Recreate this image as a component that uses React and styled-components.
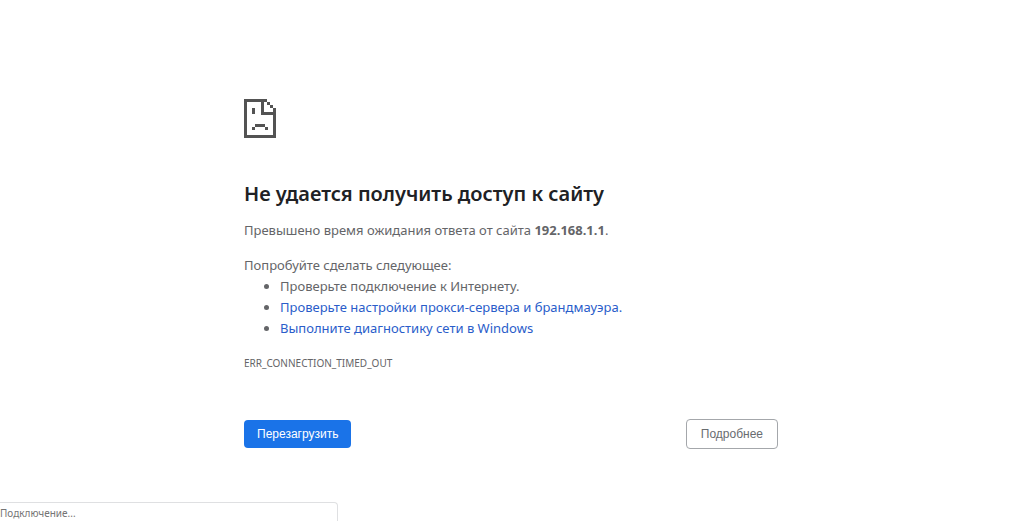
import React, { useState } from 'react'
import styled, { createGlobalStyle } from 'styled-components'

const GlobalStyle = createGlobalStyle`
body{
  margin:0;
  background:#fff;
  color:#646568;
  font-family:"Noto Sans", "Open Sans", sans-serif;
  font-size:13px;
  line-height:21px;
}
`;
const Page = styled.div`
display:flex;
flex-direction:column;
min-height:100vh;
`;
const Container = styled.main`
flex:1;
box-sizing:border-box;
width:100%;
max-width:568px;
margin:0 auto;
padding:99px 18px 24px 16px;
`;
const Icon = styled.svg`
display:block;
width:32px;
height:39px;
fill:#535353;
`;
const Title = styled.h1`
margin:41px 0 0;
color:#202124;
font-size:20px;
font-weight:600;
line-height:30px;
`;
const Text = styled.p`
margin:11px 0 0;
& + &{
  margin-top:14px;
}
`;
const List = styled.ul`
margin:0;
padding:0 0 0 36px;
`;
const Link = styled.a`
color:#2a5dca;
text-decoration:none;
&:hover{
  text-decoration:underline;
}
`;
const ErrorCode = styled.div`
margin-top:14px;
font-size:10px;
`;
const Buttons = styled.div`
display:flex;
justify-content:space-between;
align-items:center;
flex-wrap:wrap;
gap:12px;
margin-top:45px;
`;
const Button = styled.button`
padding:${({ $primary }) => ($primary ? '6px 13px' : '6px 14px')};
border:${({ $primary }) => ($primary ? '0' : '1px solid #a4a7ab')};
border-radius:4px;
background:${({ $primary }) => ($primary ? '#1a73e8' : '#fff')};
color:${({ $primary }) => ($primary ? '#fff' : '#696c70')};
font-family:"Liberation Sans", Arial, sans-serif;
font-size:12px;
line-height:16px;
cursor:pointer;
`;
const Status = styled.div`
box-sizing:border-box;
width:33%;
padding:2px 0 0;
border:1px solid #dfe0e2;
border-width:1px 1px 0 0;
border-radius:0 4px 0 0;
color:#757575;
font-size:10px;
line-height:16px;
`;

const SadPage = () => (
  <Icon viewBox="0 0 32 39" shapeRendering="crispEdges" aria-hidden="true">
    <path d="M0 0H23V3H20V13H29V9H32V39H0ZM3 3V36H29V16H17V3Z" fillRule="evenodd" />
    <path d="M23 3h3v3h-3zM26 6h3v3h-3z" />
    <path d="M8 9h3v6H8zM11 25h10v3H11zM8 28h3v3H8zM21 28h3v3h-3z" />
  </Icon>
);

const App = () => {
  const [loading, setLoading] = useState(true);

  return (
    <Page>
      <GlobalStyle />
      <Container>
        <SadPage />
        <Title>Не удается получить доступ к сайту</Title>
        <Text>
          Превышено время ожидания ответа от сайта <strong>192.168.1.1</strong>.
        </Text>
        <Text>Попробуйте сделать следующее:</Text>
        <List>
          <li>Проверьте подключение к Интернету.</li>
          <li><Link href="#proxy">Проверьте настройки прокси-сервера и брандмауэра.</Link></li>
          <li><Link href="#diagnose">Выполните диагностику сети в Windows</Link></li>
        </List>
        <ErrorCode>ERR_CONNECTION_TIMED_OUT</ErrorCode>
        <Buttons>
          <Button type="button" $primary onClick={() => setLoading(true)}>Перезагрузить</Button>
          <Button type="button" onClick={() => setLoading(false)}>Подробнее</Button>
        </Buttons>
      </Container>
      {loading && <Status role="status">Подключение...</Status>}
    </Page>
  );
};

export default App
